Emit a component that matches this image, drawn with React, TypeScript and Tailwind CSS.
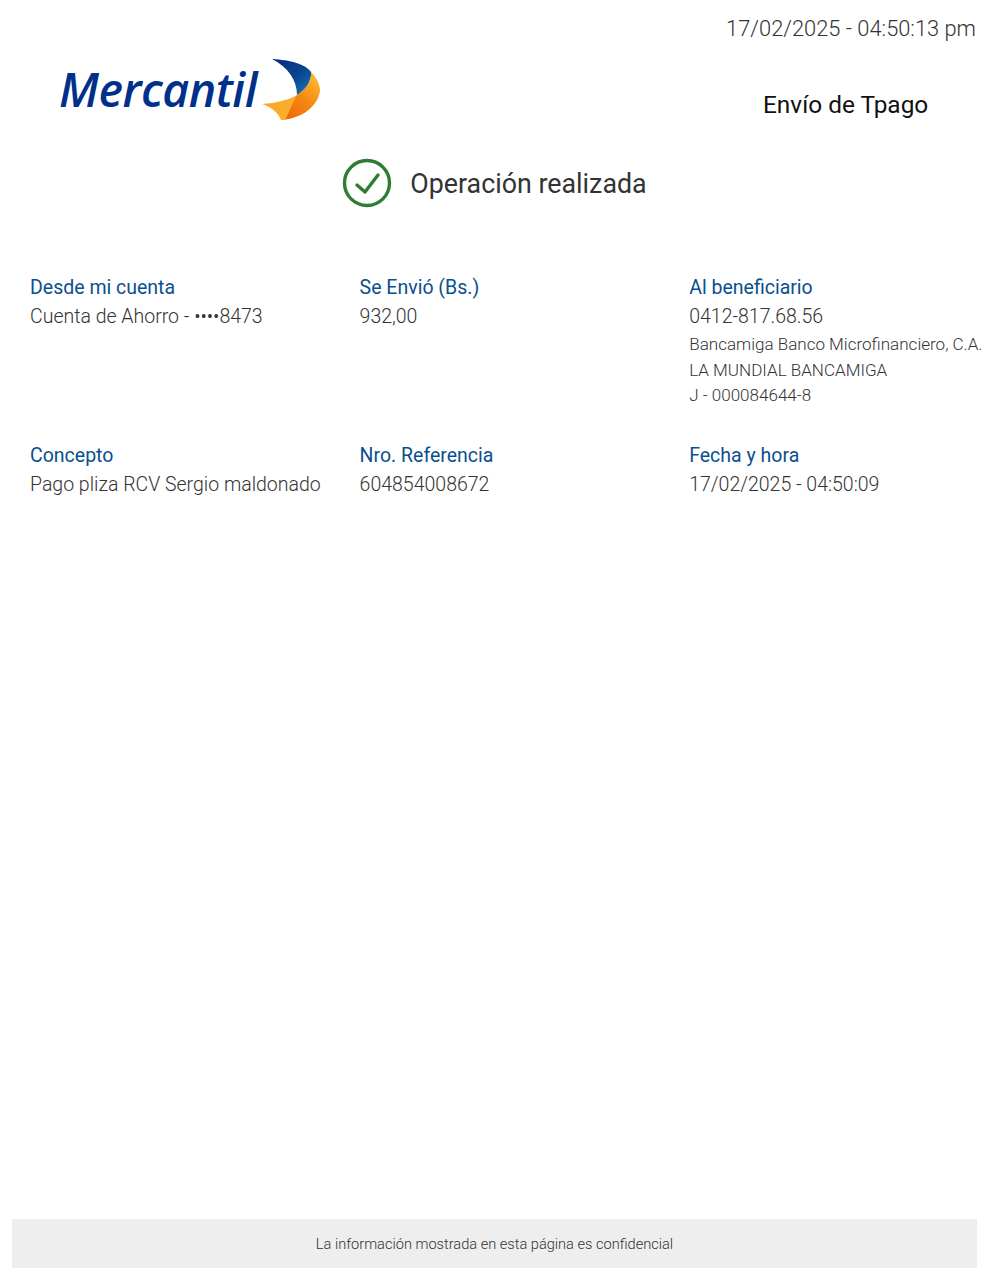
export default function App() {
  const label = "text-[19.5px] leading-[24px] text-[#0a4f8f]";
  const value = "text-[19.5px] leading-[24px] font-light text-[#333333] mt-[5px] whitespace-nowrap";
  const small = "text-[17.05px] leading-[25.5px] font-light text-[#333333] whitespace-nowrap";
  return (
    <div className="w-[989px] h-[1280px] bg-white flex flex-col font-['Roboto',sans-serif] overflow-hidden">
      <div className="flex justify-end pr-[13px] pt-[15px] h-[58px]">
        <span className="text-[21.85px] leading-[28px] font-light text-[#333333]">17/02/2025 - 04:50:13 pm</span>
      </div>
      <div className="flex justify-between h-[64px]">
        <div className="flex items-start pl-[59px]">
          <span className="w-[203px] font-['Open_Sans',sans-serif] italic font-semibold text-[46.5px] leading-[64px] tracking-[-0.5px] text-[#00308a] mt-[-1px]">Mercantil</span>
          <svg width="60" height="64" viewBox="0 0 60 64">
            <defs>
              <linearGradient id="navy" x1="0" y1="0" x2="1" y2="1">
                <stop offset="0" stopColor="#0a2a7c" />
                <stop offset="0.55" stopColor="#0b4390" />
                <stop offset="1" stopColor="#1a7cb8" />
              </linearGradient>
              <linearGradient id="orange" x1="0.2" y1="1" x2="0.8" y2="0.1">
                <stop offset="0" stopColor="#ee6a0a" />
                <stop offset="0.55" stopColor="#f68a14" />
                <stop offset="1" stopColor="#fbb42e" />
              </linearGradient>
              <linearGradient id="tail" x1="0" y1="0" x2="1" y2="0.6">
                <stop offset="0" stopColor="#f9a520" />
                <stop offset="1" stopColor="#fbb030" />
              </linearGradient>
            </defs>
            <path d="M10 1 C28 2 44 6 49 14 C50 24 43 32 35 37 C35 22 26 9 10 1Z" fill="url(#navy)" />
            <path d="M35 37 C43 32 50 24 49 14 C55 20 58 27 58 33 C56 47 42 60 20 62 C22 52 28 42 35 37Z" fill="url(#orange)" />
            <path d="M0 46 C14 45 27 42 35 37 C31 44 27 54 23 62 C22 62 20 62 19 62 C17 56 10 49 0 46Z" fill="url(#tail)" />
          </svg>
        </div>
        <div className="w-[226px] pt-[32px]">
          <span className="text-[24.4px] leading-[30px] text-[#111111]">Envío de Tpago</span>
        </div>
      </div>
      <div className="flex justify-center items-center mt-[37px] h-[50px]">
        <svg width="50" height="50" viewBox="0 0 50 50" fill="none" className="mr-[18px] mb-[2px]">
          <circle cx="25" cy="25" r="22.5" stroke="#2e7d32" strokeWidth="3.4" />
          <path d="M15 27 L23 34 L36 17" stroke="#2e7d32" strokeWidth="3.4" strokeLinecap="round" strokeLinejoin="round" />
        </svg>
        <span className="text-[26.8px] leading-[34px] text-[#333333]">Operación realizada</span>
      </div>
      <div className="grid grid-cols-[329.6px_329.6px_1fr] pl-[30px] pt-[67px]">
        <div>
          <div className={label}>Desde mi cuenta</div>
          <div className={value}>Cuenta de Ahorro - ••••8473</div>
        </div>
        <div>
          <div className={label}>Se Envió (Bs.)</div>
          <div className={value}>932,00</div>
        </div>
        <div>
          <div className={label}>Al beneficiario</div>
          <div className={value}>0412-817.68.56</div>
          <div className="mt-[3px]">
            <div className={small}>Bancamiga Banco Microfinanciero, C.A.</div>
            <div className={small}>LA MUNDIAL BANCAMIGA</div>
            <div className={small}>J - 000084644-8</div>
          </div>
        </div>
        <div className="mt-[35px]">
          <div className={label}>Concepto</div>
          <div className={value}>Pago pliza RCV Sergio maldonado</div>
        </div>
        <div className="mt-[35px]">
          <div className={label}>Nro. Referencia</div>
          <div className={value}>604854008672</div>
        </div>
        <div className="mt-[35px]">
          <div className={label}>Fecha y hora</div>
          <div className={value}>17/02/2025 - 04:50:09</div>
        </div>
      </div>
      <div className="mt-auto mb-[12px] mx-[12px] h-[49px] bg-[#eeeeee] flex items-center justify-center">
        <span className="text-[14.6px] font-light text-[#333333] mt-[2px]">La información mostrada en esta página es confidencial</span>
      </div>
    </div>
  );
}
